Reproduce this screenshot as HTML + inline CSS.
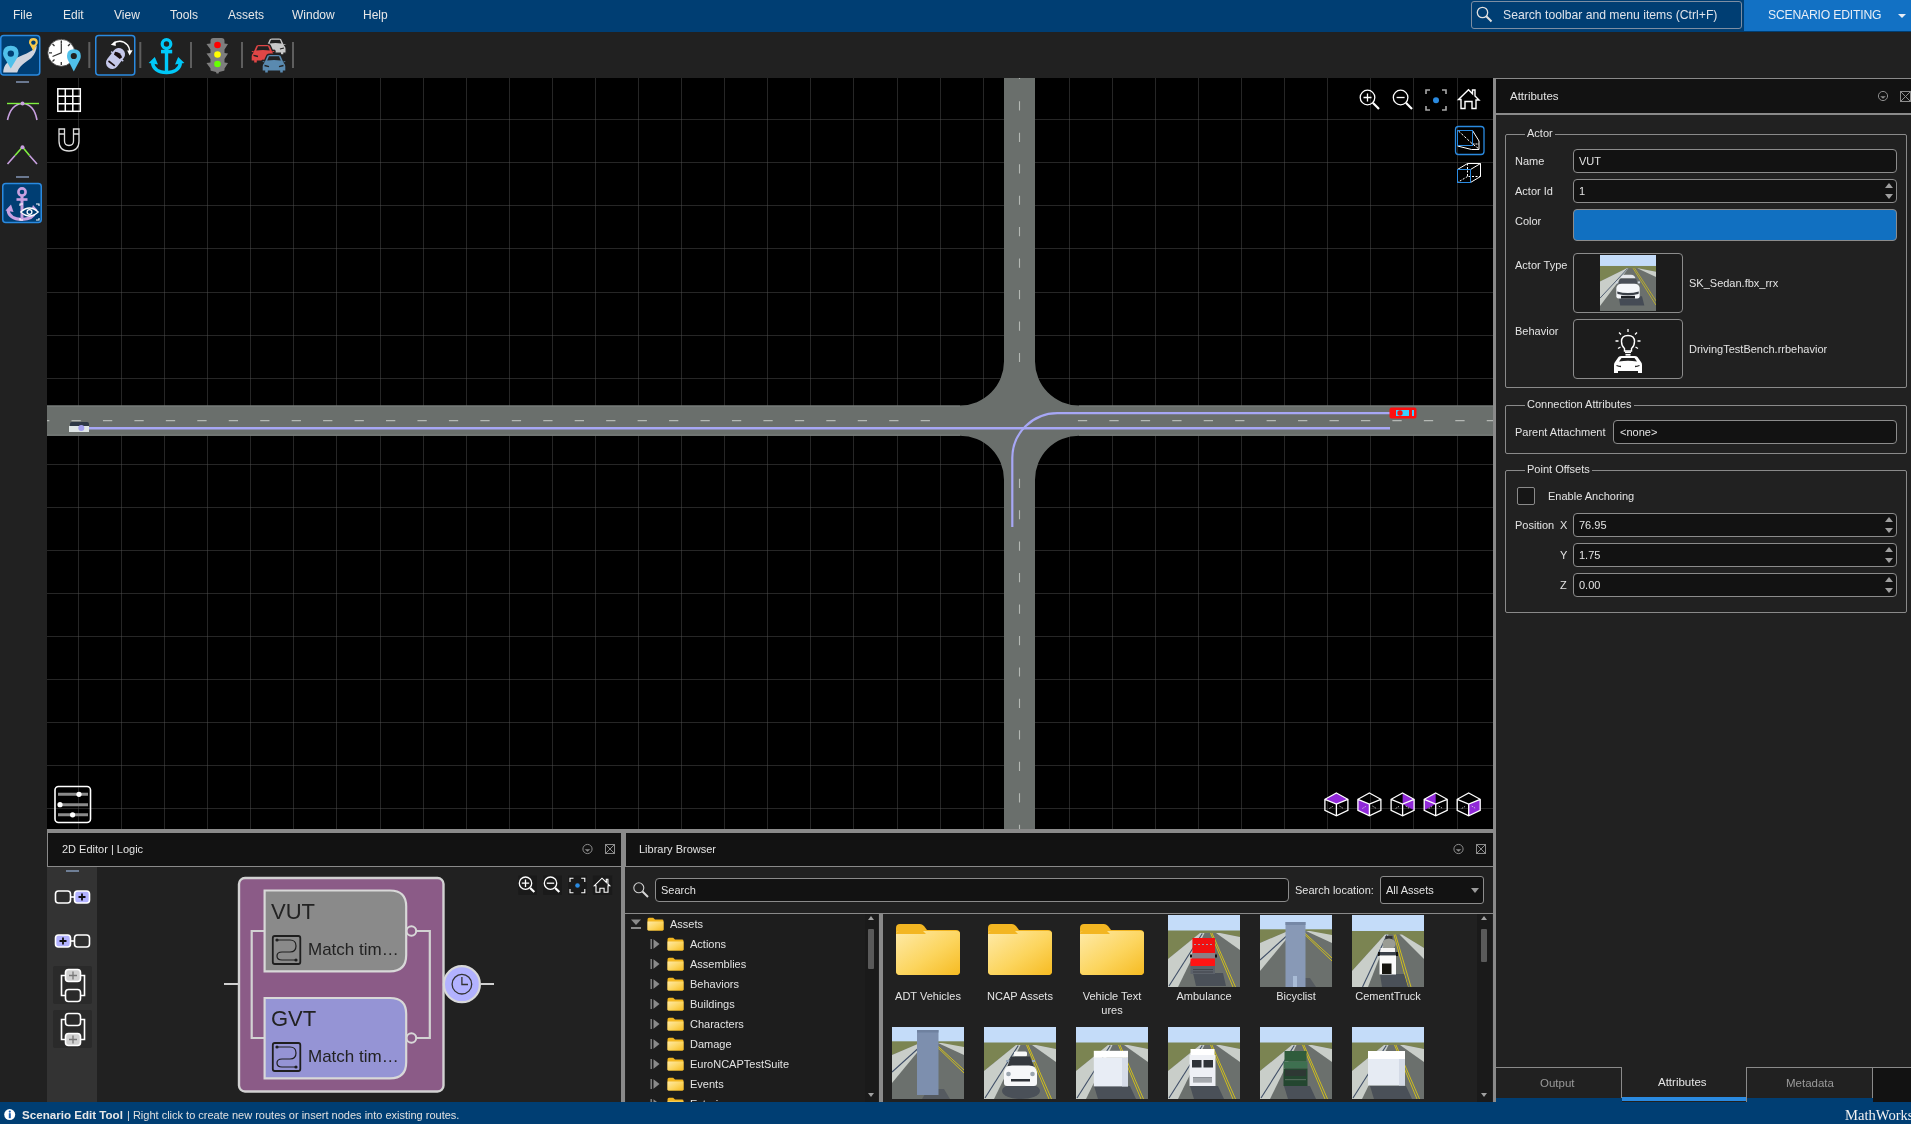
<!DOCTYPE html>
<html><head><meta charset="utf-8">
<style>
*{box-sizing:border-box;margin:0;padding:0}
html,body{width:1911px;height:1124px;overflow:hidden;background:#212121;font-family:"Liberation Sans",sans-serif;color:#e6e6e6}
.a{position:absolute}
.menubar{left:0;top:0;width:1911px;height:32px;background:#003e73}
.menubar span{position:absolute;top:8px;font-size:12px;color:#e8e8e8;will-change:transform}
.toolbar{left:0;top:32px;width:1911px;height:46px;background:#212121}
.vp{left:47px;top:78px;width:1446px;height:751px;background:#000;overflow:hidden}
.split{background:#8a8a8a}
.hdr{background:#121212;border:1px solid #8a8a8a;font-size:12px;color:#e6e6e6}
.lbl{position:absolute;font-size:11.5px;color:#e0e0e0;white-space:nowrap}
.fld{position:absolute;background:#121212;border:1px solid #8c8c8c;border-radius:4px;font-size:11.5px;color:#e6e6e6}
.grp{position:absolute;border:1px solid #8a8a8a;border-radius:2px}
.grpt{position:absolute;background:#212121;padding:0 3px;font-size:11.5px;color:#e0e0e0;white-space:nowrap}
.status{left:0;top:1102px;width:1911px;height:22px;background:#003e73}
.t{position:absolute;line-height:1;white-space:nowrap;font-size:11px;color:#e3e3e3;will-change:transform}
.spin{position:absolute;width:0;height:0;border-left:4px solid transparent;border-right:4px solid transparent}
.up{border-bottom:5px solid #a0a0a0}.dn{border-top:5px solid #a0a0a0}
</style></head><body>
<svg width="0" height="0" style="position:absolute"><defs>
<linearGradient id="fg" x1="0" y1="0" x2="1" y2="1"><stop offset="0" stop-color="#feeaa8"/><stop offset="0.55" stop-color="#fcd55e"/><stop offset="1" stop-color="#f6bb22"/></linearGradient>
</defs></svg>
<!-- MENUBAR -->
<div class="a menubar">
<span style="left:13px">File</span><span style="left:63px">Edit</span><span style="left:114px">View</span><span style="left:170px">Tools</span><span style="left:228px">Assets</span><span style="left:292px">Window</span><span style="left:363px">Help</span>
</div>
<div class="a" style="left:1471px;top:1px;width:271px;height:28px;border:1px solid #7d8ea3;border-radius:3px;background:#003e73"></div>
<svg class="a" style="left:1474px;top:5px" width="22" height="20"><circle cx="8.5" cy="7.5" r="5.2" stroke="#e0e0e0" stroke-width="1.3" fill="none"/><path d="M12.3 11.3L17.5 16.5" stroke="#e0e0e0" stroke-width="2"/></svg>
<span class="t" style="left:1503px;top:8.97px;font-size:12.2px;color:#dfe3ea">Search toolbar and menu items (Ctrl+F)</span>
<div class="a" style="left:1744px;top:0;width:167px;height:31px;background:#1271c4"></div>
<span class="t" style="left:1768px;top:8.97px;font-size:12.2px;color:#e8eef6;letter-spacing:-0.2px">SCENARIO EDITING</span>
<div class="spin dn" style="left:1897.5px;top:13.5px;border-left-width:4px;border-right-width:4px;border-top:4px solid #e8eef6"></div>
<!-- TOOLBAR -->
<div class="a toolbar"></div>
<svg class="a" style="left:0;top:32px" width="300" height="46" viewBox="0 32 300 46">
<!-- btn1 -->
<rect x="0.75" y="35.5" width="39" height="39.5" rx="3" fill="#003e73" stroke="#2a8ae0" stroke-width="1.5"/>
<path d="M3.2 72.6Q3.5 66 7 63Q11 59 18.5 57Q28 53 32 50.5L36.8 45.5Q36.5 53 31 58.2Q24 63 20.8 66.2Q18 69 17.2 72.6Z" fill="#d0d4de"/>
<path d="M10.8 68.6L4.5 58Q3 55.6 3 53.6Q3 45.8 10.8 45.8Q18.6 45.8 18.6 53.6Q18.6 55.6 17.1 58Z" fill="#50c0ea"/>
<circle cx="10.8" cy="53.6" r="3.2" fill="#003e73"/>
<path d="M33.4 51L29.8 44.6Q29 43.5 29 42.4Q29 38 33.4 38Q37.8 38 37.8 42.4Q37.8 43.5 37 44.6Z" fill="#f8c94c"/>
<circle cx="33.4" cy="42.6" r="2.2" fill="#003e73"/>
<!-- clock -->
<circle cx="61.3" cy="52.8" r="13.5" fill="#fff" stroke="#444" stroke-width="0.8"/>
<g stroke="#333" stroke-width="1.3"><path d="M61.3 40.5V43.5M61.3 62V65M49 52.8H52M70.5 52.8H73.5M52.5 44L54.5 46M70 44L68 46M52.5 61.5L54.5 59.5"/></g>
<path d="M61.3 43.5V52.8L52.5 56.5" stroke="#333" stroke-width="1.2" fill="none"/>
<path d="M73.8 71.5L67.8 59.8Q67 58 67 56Q67 49.2 73.8 49.2Q80.8 49.2 80.8 56Q80.8 58 80 59.8Z" fill="#4fc0ea"/>
<circle cx="73.8" cy="56" r="3.1" fill="#222"/>
<rect x="88.3" y="42" width="2" height="26" fill="#5e5e5e"/>
<!-- car rotate btn -->
<rect x="95.75" y="35.5" width="39" height="39.5" rx="3" fill="#212121" stroke="#2a8ae0" stroke-width="1.5"/>
<g transform="rotate(38 115.5 58.5)"><rect x="109.3" y="47" width="12.4" height="23" rx="6" fill="#c5c8ea"/><path d="M111 53.5Q115.5 50.5 120 53.5L119.2 56.3H111.8Z" fill="#1a0e10"/><rect x="111.5" y="64" width="8" height="1.6" fill="#1a0e10"/><rect x="107.8" y="55" width="2" height="1.5" fill="#c5c8ea"/><rect x="121.2" y="55" width="2" height="1.5" fill="#c5c8ea"/></g>
<path d="M113.5 43.5Q121 38.5 127.5 45Q129.5 47.5 129.8 51" stroke="#fff" stroke-width="1.4" fill="none"/>
<path d="M110.8 44.8L115.5 40.8L115.8 46Z" fill="#fff"/><path d="M129.6 55.5L132.6 50.2L127.2 50.5Z" fill="#fff"/>
<rect x="139.3" y="42" width="2" height="26" fill="#5e5e5e"/>
<!-- anchor -->
<circle cx="166.5" cy="44" r="4.3" fill="none" stroke="#00c8f8" stroke-width="3.2"/>
<rect x="161" y="49.8" width="11.2" height="3.6" fill="#00c8f8"/><rect x="164.8" y="48" width="3.4" height="24" fill="#00c8f8"/>
<path d="M152.5 63Q154 72.3 166.5 72.6Q179 72.3 180.5 63" fill="none" stroke="#00c8f8" stroke-width="3.4"/>
<path d="M148.6 63L154.8 57L158 64.5Z M184.4 63L178.2 57L175 64.5Z" fill="#00c8f8"/>
<rect x="190" y="42" width="2" height="26" fill="#5e5e5e"/>
<!-- traffic light -->
<path d="M210.5 41Q210.5 38 213.5 38H221.5Q224.5 38 224.5 41V43.5L228 44L224.5 49.5V53L228 53.5L224.5 59V62.5L228 63L224.5 68.5V70Q224.5 71 223 71L219 72L218.5 73.5H216.5L216 72L212 71Q210.5 71 210.5 70V68.5L206.5 63L210.5 62.5V59L206.5 53.5L210.5 53V49.5L206.5 44L210.5 43.5Z" fill="#7e7e7e"/>
<circle cx="217.5" cy="45" r="3.3" fill="#f00"/><circle cx="217.5" cy="54.5" r="3.3" fill="#ff0"/><circle cx="217.5" cy="64" r="3.3" fill="#6f0"/>
<rect x="241" y="42" width="2" height="26" fill="#5e5e5e"/>
<!-- cars -->
<g transform="translate(264.8 38) scale(0.89)"><path d="M5 1Q6 0 8 0H16Q18 0 19 1L21.5 6.5L23 6Q24 6 24 7V8L22.5 8.5Q24 10 24 12V17H21.5V19H17.5V17H6.5V19H2.5V17H0V12Q0 10 1.5 8.5L0 8V7Q0 6 1 6L2.5 6.5Z" fill="#c8c8c8" stroke="#212121" stroke-width="1.4"/><path d="M5.2 6.3L7 2H17L18.8 6.3Q12 5.2 5.2 6.3Z" fill="#212121"/><path d="M2.5 11.2L7 12.3M21.5 11.2L17 12.3" stroke="#212121" stroke-width="1.3"/></g><g transform="translate(251 44.2) scale(1.0)"><path d="M5 1Q6 0 8 0H16Q18 0 19 1L21.5 6.5L23 6Q24 6 24 7V8L22.5 8.5Q24 10 24 12V17H21.5V19H17.5V17H6.5V19H2.5V17H0V12Q0 10 1.5 8.5L0 8V7Q0 6 1 6L2.5 6.5Z" fill="#e04646" stroke="#212121" stroke-width="1.4"/><path d="M5.2 6.3L7 2H17L18.8 6.3Q12 5.2 5.2 6.3Z" fill="#212121"/><path d="M2.5 11.2L7 12.3M21.5 11.2L17 12.3" stroke="#212121" stroke-width="1.3"/></g><g transform="translate(262 54.3) scale(1.0)"><path d="M5 1Q6 0 8 0H16Q18 0 19 1L21.5 6.5L23 6Q24 6 24 7V8L22.5 8.5Q24 10 24 12V17H21.5V19H17.5V17H6.5V19H2.5V17H0V12Q0 10 1.5 8.5L0 8V7Q0 6 1 6L2.5 6.5Z" fill="#5a8ab0" stroke="#212121" stroke-width="1.4"/><path d="M5.2 6.3L7 2H17L18.8 6.3Q12 5.2 5.2 6.3Z" fill="#212121"/><path d="M2.5 11.2L7 12.3M21.5 11.2L17 12.3" stroke="#212121" stroke-width="1.3"/></g>
<rect x="292" y="42" width="2" height="26" fill="#5e5e5e"/>
</svg>

<!-- VIEWPORT -->
<div class="a vp"><svg width="1446" height="751" style="position:absolute;left:0;top:0">
<path d="M31.5 0V751M74.5 0V751M117.5 0V751M160.5 0V751M203.5 0V751M246.5 0V751M289.5 0V751M333.5 0V751M376.5 0V751M419.5 0V751M462.5 0V751M505.5 0V751M548.5 0V751M591.5 0V751M634.5 0V751M677.5 0V751M720.5 0V751M763.5 0V751M806.5 0V751M850.5 0V751M893.5 0V751M936.5 0V751M979.5 0V751M1022.5 0V751M1065.5 0V751M1108.5 0V751M1151.5 0V751M1194.5 0V751M1237.5 0V751M1280.5 0V751M1323.5 0V751M1366.5 0V751M1410.5 0V751M0 41.5H1446M0 84.5H1446M0 127.5H1446M0 170.5H1446M0 214.5H1446M0 257.5H1446M0 300.5H1446M0 343.5H1446M0 386.5H1446M0 429.5H1446M0 472.5H1446M0 515.5H1446M0 558.5H1446M0 601.5H1446M0 644.5H1446M0 687.5H1446M0 730.5H1446" stroke="#262626" stroke-width="1" fill="none"/>
<path d="M31 41h1v1h-1zM31 84h1v1h-1zM31 127h1v1h-1zM31 170h1v1h-1zM31 214h1v1h-1zM31 257h1v1h-1zM31 300h1v1h-1zM31 343h1v1h-1zM31 386h1v1h-1zM31 429h1v1h-1zM31 472h1v1h-1zM31 515h1v1h-1zM31 558h1v1h-1zM31 601h1v1h-1zM31 644h1v1h-1zM31 687h1v1h-1zM31 730h1v1h-1zM74 41h1v1h-1zM74 84h1v1h-1zM74 127h1v1h-1zM74 170h1v1h-1zM74 214h1v1h-1zM74 257h1v1h-1zM74 300h1v1h-1zM74 343h1v1h-1zM74 386h1v1h-1zM74 429h1v1h-1zM74 472h1v1h-1zM74 515h1v1h-1zM74 558h1v1h-1zM74 601h1v1h-1zM74 644h1v1h-1zM74 687h1v1h-1zM74 730h1v1h-1zM117 41h1v1h-1zM117 84h1v1h-1zM117 127h1v1h-1zM117 170h1v1h-1zM117 214h1v1h-1zM117 257h1v1h-1zM117 300h1v1h-1zM117 343h1v1h-1zM117 386h1v1h-1zM117 429h1v1h-1zM117 472h1v1h-1zM117 515h1v1h-1zM117 558h1v1h-1zM117 601h1v1h-1zM117 644h1v1h-1zM117 687h1v1h-1zM117 730h1v1h-1zM160 41h1v1h-1zM160 84h1v1h-1zM160 127h1v1h-1zM160 170h1v1h-1zM160 214h1v1h-1zM160 257h1v1h-1zM160 300h1v1h-1zM160 343h1v1h-1zM160 386h1v1h-1zM160 429h1v1h-1zM160 472h1v1h-1zM160 515h1v1h-1zM160 558h1v1h-1zM160 601h1v1h-1zM160 644h1v1h-1zM160 687h1v1h-1zM160 730h1v1h-1zM203 41h1v1h-1zM203 84h1v1h-1zM203 127h1v1h-1zM203 170h1v1h-1zM203 214h1v1h-1zM203 257h1v1h-1zM203 300h1v1h-1zM203 343h1v1h-1zM203 386h1v1h-1zM203 429h1v1h-1zM203 472h1v1h-1zM203 515h1v1h-1zM203 558h1v1h-1zM203 601h1v1h-1zM203 644h1v1h-1zM203 687h1v1h-1zM203 730h1v1h-1zM246 41h1v1h-1zM246 84h1v1h-1zM246 127h1v1h-1zM246 170h1v1h-1zM246 214h1v1h-1zM246 257h1v1h-1zM246 300h1v1h-1zM246 343h1v1h-1zM246 386h1v1h-1zM246 429h1v1h-1zM246 472h1v1h-1zM246 515h1v1h-1zM246 558h1v1h-1zM246 601h1v1h-1zM246 644h1v1h-1zM246 687h1v1h-1zM246 730h1v1h-1zM289 41h1v1h-1zM289 84h1v1h-1zM289 127h1v1h-1zM289 170h1v1h-1zM289 214h1v1h-1zM289 257h1v1h-1zM289 300h1v1h-1zM289 343h1v1h-1zM289 386h1v1h-1zM289 429h1v1h-1zM289 472h1v1h-1zM289 515h1v1h-1zM289 558h1v1h-1zM289 601h1v1h-1zM289 644h1v1h-1zM289 687h1v1h-1zM289 730h1v1h-1zM333 41h1v1h-1zM333 84h1v1h-1zM333 127h1v1h-1zM333 170h1v1h-1zM333 214h1v1h-1zM333 257h1v1h-1zM333 300h1v1h-1zM333 343h1v1h-1zM333 386h1v1h-1zM333 429h1v1h-1zM333 472h1v1h-1zM333 515h1v1h-1zM333 558h1v1h-1zM333 601h1v1h-1zM333 644h1v1h-1zM333 687h1v1h-1zM333 730h1v1h-1zM376 41h1v1h-1zM376 84h1v1h-1zM376 127h1v1h-1zM376 170h1v1h-1zM376 214h1v1h-1zM376 257h1v1h-1zM376 300h1v1h-1zM376 343h1v1h-1zM376 386h1v1h-1zM376 429h1v1h-1zM376 472h1v1h-1zM376 515h1v1h-1zM376 558h1v1h-1zM376 601h1v1h-1zM376 644h1v1h-1zM376 687h1v1h-1zM376 730h1v1h-1zM419 41h1v1h-1zM419 84h1v1h-1zM419 127h1v1h-1zM419 170h1v1h-1zM419 214h1v1h-1zM419 257h1v1h-1zM419 300h1v1h-1zM419 343h1v1h-1zM419 386h1v1h-1zM419 429h1v1h-1zM419 472h1v1h-1zM419 515h1v1h-1zM419 558h1v1h-1zM419 601h1v1h-1zM419 644h1v1h-1zM419 687h1v1h-1zM419 730h1v1h-1zM462 41h1v1h-1zM462 84h1v1h-1zM462 127h1v1h-1zM462 170h1v1h-1zM462 214h1v1h-1zM462 257h1v1h-1zM462 300h1v1h-1zM462 343h1v1h-1zM462 386h1v1h-1zM462 429h1v1h-1zM462 472h1v1h-1zM462 515h1v1h-1zM462 558h1v1h-1zM462 601h1v1h-1zM462 644h1v1h-1zM462 687h1v1h-1zM462 730h1v1h-1zM505 41h1v1h-1zM505 84h1v1h-1zM505 127h1v1h-1zM505 170h1v1h-1zM505 214h1v1h-1zM505 257h1v1h-1zM505 300h1v1h-1zM505 343h1v1h-1zM505 386h1v1h-1zM505 429h1v1h-1zM505 472h1v1h-1zM505 515h1v1h-1zM505 558h1v1h-1zM505 601h1v1h-1zM505 644h1v1h-1zM505 687h1v1h-1zM505 730h1v1h-1zM548 41h1v1h-1zM548 84h1v1h-1zM548 127h1v1h-1zM548 170h1v1h-1zM548 214h1v1h-1zM548 257h1v1h-1zM548 300h1v1h-1zM548 343h1v1h-1zM548 386h1v1h-1zM548 429h1v1h-1zM548 472h1v1h-1zM548 515h1v1h-1zM548 558h1v1h-1zM548 601h1v1h-1zM548 644h1v1h-1zM548 687h1v1h-1zM548 730h1v1h-1zM591 41h1v1h-1zM591 84h1v1h-1zM591 127h1v1h-1zM591 170h1v1h-1zM591 214h1v1h-1zM591 257h1v1h-1zM591 300h1v1h-1zM591 343h1v1h-1zM591 386h1v1h-1zM591 429h1v1h-1zM591 472h1v1h-1zM591 515h1v1h-1zM591 558h1v1h-1zM591 601h1v1h-1zM591 644h1v1h-1zM591 687h1v1h-1zM591 730h1v1h-1zM634 41h1v1h-1zM634 84h1v1h-1zM634 127h1v1h-1zM634 170h1v1h-1zM634 214h1v1h-1zM634 257h1v1h-1zM634 300h1v1h-1zM634 343h1v1h-1zM634 386h1v1h-1zM634 429h1v1h-1zM634 472h1v1h-1zM634 515h1v1h-1zM634 558h1v1h-1zM634 601h1v1h-1zM634 644h1v1h-1zM634 687h1v1h-1zM634 730h1v1h-1zM677 41h1v1h-1zM677 84h1v1h-1zM677 127h1v1h-1zM677 170h1v1h-1zM677 214h1v1h-1zM677 257h1v1h-1zM677 300h1v1h-1zM677 343h1v1h-1zM677 386h1v1h-1zM677 429h1v1h-1zM677 472h1v1h-1zM677 515h1v1h-1zM677 558h1v1h-1zM677 601h1v1h-1zM677 644h1v1h-1zM677 687h1v1h-1zM677 730h1v1h-1zM720 41h1v1h-1zM720 84h1v1h-1zM720 127h1v1h-1zM720 170h1v1h-1zM720 214h1v1h-1zM720 257h1v1h-1zM720 300h1v1h-1zM720 343h1v1h-1zM720 386h1v1h-1zM720 429h1v1h-1zM720 472h1v1h-1zM720 515h1v1h-1zM720 558h1v1h-1zM720 601h1v1h-1zM720 644h1v1h-1zM720 687h1v1h-1zM720 730h1v1h-1zM763 41h1v1h-1zM763 84h1v1h-1zM763 127h1v1h-1zM763 170h1v1h-1zM763 214h1v1h-1zM763 257h1v1h-1zM763 300h1v1h-1zM763 343h1v1h-1zM763 386h1v1h-1zM763 429h1v1h-1zM763 472h1v1h-1zM763 515h1v1h-1zM763 558h1v1h-1zM763 601h1v1h-1zM763 644h1v1h-1zM763 687h1v1h-1zM763 730h1v1h-1zM806 41h1v1h-1zM806 84h1v1h-1zM806 127h1v1h-1zM806 170h1v1h-1zM806 214h1v1h-1zM806 257h1v1h-1zM806 300h1v1h-1zM806 343h1v1h-1zM806 386h1v1h-1zM806 429h1v1h-1zM806 472h1v1h-1zM806 515h1v1h-1zM806 558h1v1h-1zM806 601h1v1h-1zM806 644h1v1h-1zM806 687h1v1h-1zM806 730h1v1h-1zM850 41h1v1h-1zM850 84h1v1h-1zM850 127h1v1h-1zM850 170h1v1h-1zM850 214h1v1h-1zM850 257h1v1h-1zM850 300h1v1h-1zM850 343h1v1h-1zM850 386h1v1h-1zM850 429h1v1h-1zM850 472h1v1h-1zM850 515h1v1h-1zM850 558h1v1h-1zM850 601h1v1h-1zM850 644h1v1h-1zM850 687h1v1h-1zM850 730h1v1h-1zM893 41h1v1h-1zM893 84h1v1h-1zM893 127h1v1h-1zM893 170h1v1h-1zM893 214h1v1h-1zM893 257h1v1h-1zM893 300h1v1h-1zM893 343h1v1h-1zM893 386h1v1h-1zM893 429h1v1h-1zM893 472h1v1h-1zM893 515h1v1h-1zM893 558h1v1h-1zM893 601h1v1h-1zM893 644h1v1h-1zM893 687h1v1h-1zM893 730h1v1h-1zM936 41h1v1h-1zM936 84h1v1h-1zM936 127h1v1h-1zM936 170h1v1h-1zM936 214h1v1h-1zM936 257h1v1h-1zM936 300h1v1h-1zM936 343h1v1h-1zM936 386h1v1h-1zM936 429h1v1h-1zM936 472h1v1h-1zM936 515h1v1h-1zM936 558h1v1h-1zM936 601h1v1h-1zM936 644h1v1h-1zM936 687h1v1h-1zM936 730h1v1h-1zM979 41h1v1h-1zM979 84h1v1h-1zM979 127h1v1h-1zM979 170h1v1h-1zM979 214h1v1h-1zM979 257h1v1h-1zM979 300h1v1h-1zM979 343h1v1h-1zM979 386h1v1h-1zM979 429h1v1h-1zM979 472h1v1h-1zM979 515h1v1h-1zM979 558h1v1h-1zM979 601h1v1h-1zM979 644h1v1h-1zM979 687h1v1h-1zM979 730h1v1h-1zM1022 41h1v1h-1zM1022 84h1v1h-1zM1022 127h1v1h-1zM1022 170h1v1h-1zM1022 214h1v1h-1zM1022 257h1v1h-1zM1022 300h1v1h-1zM1022 343h1v1h-1zM1022 386h1v1h-1zM1022 429h1v1h-1zM1022 472h1v1h-1zM1022 515h1v1h-1zM1022 558h1v1h-1zM1022 601h1v1h-1zM1022 644h1v1h-1zM1022 687h1v1h-1zM1022 730h1v1h-1zM1065 41h1v1h-1zM1065 84h1v1h-1zM1065 127h1v1h-1zM1065 170h1v1h-1zM1065 214h1v1h-1zM1065 257h1v1h-1zM1065 300h1v1h-1zM1065 343h1v1h-1zM1065 386h1v1h-1zM1065 429h1v1h-1zM1065 472h1v1h-1zM1065 515h1v1h-1zM1065 558h1v1h-1zM1065 601h1v1h-1zM1065 644h1v1h-1zM1065 687h1v1h-1zM1065 730h1v1h-1zM1108 41h1v1h-1zM1108 84h1v1h-1zM1108 127h1v1h-1zM1108 170h1v1h-1zM1108 214h1v1h-1zM1108 257h1v1h-1zM1108 300h1v1h-1zM1108 343h1v1h-1zM1108 386h1v1h-1zM1108 429h1v1h-1zM1108 472h1v1h-1zM1108 515h1v1h-1zM1108 558h1v1h-1zM1108 601h1v1h-1zM1108 644h1v1h-1zM1108 687h1v1h-1zM1108 730h1v1h-1zM1151 41h1v1h-1zM1151 84h1v1h-1zM1151 127h1v1h-1zM1151 170h1v1h-1zM1151 214h1v1h-1zM1151 257h1v1h-1zM1151 300h1v1h-1zM1151 343h1v1h-1zM1151 386h1v1h-1zM1151 429h1v1h-1zM1151 472h1v1h-1zM1151 515h1v1h-1zM1151 558h1v1h-1zM1151 601h1v1h-1zM1151 644h1v1h-1zM1151 687h1v1h-1zM1151 730h1v1h-1zM1194 41h1v1h-1zM1194 84h1v1h-1zM1194 127h1v1h-1zM1194 170h1v1h-1zM1194 214h1v1h-1zM1194 257h1v1h-1zM1194 300h1v1h-1zM1194 343h1v1h-1zM1194 386h1v1h-1zM1194 429h1v1h-1zM1194 472h1v1h-1zM1194 515h1v1h-1zM1194 558h1v1h-1zM1194 601h1v1h-1zM1194 644h1v1h-1zM1194 687h1v1h-1zM1194 730h1v1h-1zM1237 41h1v1h-1zM1237 84h1v1h-1zM1237 127h1v1h-1zM1237 170h1v1h-1zM1237 214h1v1h-1zM1237 257h1v1h-1zM1237 300h1v1h-1zM1237 343h1v1h-1zM1237 386h1v1h-1zM1237 429h1v1h-1zM1237 472h1v1h-1zM1237 515h1v1h-1zM1237 558h1v1h-1zM1237 601h1v1h-1zM1237 644h1v1h-1zM1237 687h1v1h-1zM1237 730h1v1h-1zM1280 41h1v1h-1zM1280 84h1v1h-1zM1280 127h1v1h-1zM1280 170h1v1h-1zM1280 214h1v1h-1zM1280 257h1v1h-1zM1280 300h1v1h-1zM1280 343h1v1h-1zM1280 386h1v1h-1zM1280 429h1v1h-1zM1280 472h1v1h-1zM1280 515h1v1h-1zM1280 558h1v1h-1zM1280 601h1v1h-1zM1280 644h1v1h-1zM1280 687h1v1h-1zM1280 730h1v1h-1zM1323 41h1v1h-1zM1323 84h1v1h-1zM1323 127h1v1h-1zM1323 170h1v1h-1zM1323 214h1v1h-1zM1323 257h1v1h-1zM1323 300h1v1h-1zM1323 343h1v1h-1zM1323 386h1v1h-1zM1323 429h1v1h-1zM1323 472h1v1h-1zM1323 515h1v1h-1zM1323 558h1v1h-1zM1323 601h1v1h-1zM1323 644h1v1h-1zM1323 687h1v1h-1zM1323 730h1v1h-1zM1366 41h1v1h-1zM1366 84h1v1h-1zM1366 127h1v1h-1zM1366 170h1v1h-1zM1366 214h1v1h-1zM1366 257h1v1h-1zM1366 300h1v1h-1zM1366 343h1v1h-1zM1366 386h1v1h-1zM1366 429h1v1h-1zM1366 472h1v1h-1zM1366 515h1v1h-1zM1366 558h1v1h-1zM1366 601h1v1h-1zM1366 644h1v1h-1zM1366 687h1v1h-1zM1366 730h1v1h-1zM1410 41h1v1h-1zM1410 84h1v1h-1zM1410 127h1v1h-1zM1410 170h1v1h-1zM1410 214h1v1h-1zM1410 257h1v1h-1zM1410 300h1v1h-1zM1410 343h1v1h-1zM1410 386h1v1h-1zM1410 429h1v1h-1zM1410 472h1v1h-1zM1410 515h1v1h-1zM1410 558h1v1h-1zM1410 601h1v1h-1zM1410 644h1v1h-1zM1410 687h1v1h-1zM1410 730h1v1h-1z" fill="#3a3a3a"/>
<path d="M0 327.5H913A44 44 0 0 0 957 283.5V0H988V283.5A44 44 0 0 0 1032 327.5H1446V357.7H1032A44 44 0 0 0 988 401.7V751H957V401.7A44 44 0 0 0 913 357.7H0Z" fill="#6a6f6c"/>
<path d="M0 328.0H913M1032 328.0H1446M0 357.2H913M1032 357.2H1446" stroke="#7f8481" stroke-width="1" fill="none"/>
<path d="M0 342.6H2.35M24.5 342.6H33.8M55.95 342.6H65.25M87.4 342.6H96.7M118.85 342.6H128.15M150.3 342.6H159.6M181.75 342.6H191.05M213.2 342.6H222.5M244.65 342.6H253.95M276.1 342.6H285.4M307.55 342.6H316.85M339.0 342.6H348.3M370.45 342.6H379.75M401.9 342.6H411.2M433.35 342.6H442.65M464.8 342.6H474.1M496.25 342.6H505.55M527.7 342.6H537.0M559.15 342.6H568.45M590.6 342.6H599.9M622.05 342.6H631.35M653.5 342.6H662.8M684.95 342.6H694.25M716.4 342.6H725.7M747.85 342.6H757.15M779.3 342.6H788.6M810.75 342.6H820.05M842.2 342.6H851.5M873.65 342.6H882.95M1030.9 342.6H1040.2M1062.35 342.6H1071.65M1093.8 342.6H1103.1M1125.25 342.6H1134.55M1156.7 342.6H1166.0M1188.15 342.6H1197.45M1219.6 342.6H1228.9M1251.05 342.6H1260.35M1282.5 342.6H1291.8M1313.95 342.6H1323.25M1345.4 342.6H1354.7M1376.85 342.6H1386.15M1408.3 342.6H1417.6M1439.75 342.6H1446M972.5 0V1.05M972.5 23.3V32.5M972.5 54.75V63.95M972.5 86.2V95.4M972.5 117.65V126.85M972.5 149.1V158.3M972.5 180.55V189.75M972.5 212.0V221.2M972.5 243.45V252.65M972.5 274.9V284.1M972.5 400.7V409.9M972.5 432.15V441.35M972.5 463.6V472.8M972.5 495.05V504.25M972.5 526.5V535.7M972.5 557.95V567.15M972.5 589.4V598.6M972.5 620.85V630.05M972.5 652.3V661.5M972.5 683.75V692.95M972.5 715.2V724.4M972.5 746.65V751" stroke="#b4b8b4" stroke-width="1.1" fill="none"/>
<path d="M38 350.2H1343" stroke="#a7a7f5" stroke-width="2.4" fill="none"/>
<path d="M1343 335.1H1010.3A45 45 0 0 0 965.3 380.1V449" stroke="#a7a7f5" stroke-width="2.2" fill="none"/>
<rect x="23" y="344" width="19" height="9" fill="#2e3846" rx="2"/>
<rect x="22" y="348" width="20" height="6" fill="#dfe6e6"/>
<circle cx="34.3" cy="350" r="3" fill="#a3a0ee"/>
<rect x="1342.5" y="329.5" width="27" height="11" rx="2" fill="#ff1010"/>
<rect x="1349" y="332" width="13" height="6" fill="#3ad0ff"/>
<rect x="1365" y="332" width="2" height="6" fill="#3ad0ff"/>
<circle cx="1353" cy="335" r="2.7" fill="#ff1010"/>
</svg></div>
<svg class="a" style="left:0;top:78px" width="47" height="150" viewBox="0 78 47 150">
<rect x="16" y="81" width="13" height="2" fill="#6a7890"/>
<path d="M7.5 120Q11 104 22.5 103.5Q34 104 37 120" stroke="#c8a0e0" stroke-width="1.6" fill="none"/>
<path d="M7 103.5H39" stroke="#80f040" stroke-width="1.4"/>
<circle cx="22.5" cy="103.5" r="2" fill="#c8a0e0"/>
<path d="M7.5 164L15 155.5M37 164L29.5 155.5" stroke="#c8a0e0" stroke-width="1.6"/>
<path d="M15 155.5L22.5 147M29.5 155.5L22.5 147" stroke="#80f040" stroke-width="1.6"/>
<circle cx="22.5" cy="147.3" r="2" fill="#c8a0e0"/>
<rect x="16" y="176" width="13" height="2" fill="#6a7890"/>
<rect x="2.75" y="183.5" width="38.5" height="39" rx="3" fill="#003e73" stroke="#2a8ae0" stroke-width="1.5"/>
<g stroke="#c8a0e0" fill="none"><circle cx="22" cy="192" r="3.6" stroke-width="2.6"/><path d="M22 195.5V219" stroke-width="3"/><path d="M16.5 199.5H27.5" stroke-width="2.6"/><path d="M8 210Q9 219 22 219.5Q33 219 35 212" stroke-width="3"/></g>
<path d="M5.5 210.5L11 204.5L13.5 212Z M37.5 210L33 205L31 211Z" fill="#c8a0e0"/>
<path d="M20 206V204H23M36 204H39V206M39 218V220H36M23 220H20V218" stroke="#fff" stroke-width="1.1" fill="none"/>
<path d="M20.8 212Q29.5 204 38.2 212Q29.5 220 20.8 212Z" fill="#003e73" stroke="#fff" stroke-width="1.3"/>
<circle cx="29.5" cy="212" r="2.4" fill="none" stroke="#fff" stroke-width="1.3"/>
</svg>
<svg class="a" style="left:47px;top:78px" width="60" height="90" viewBox="47 78 60 90">
<g stroke="#fff" stroke-width="1.5" fill="none"><rect x="57.8" y="88.8" width="22.5" height="22.5"/><path d="M65.3 88.8V111.3M72.8 88.8V111.3M57.8 96.3H80.3M57.8 103.8H80.3"/></g>
<path d="M59 129V141Q59 151 69 151Q79 151 79 141V129H73.5V141Q73.5 145.5 69 145.5Q64.5 145.5 64.5 141V129Z" fill="none" stroke="#ddd" stroke-width="1.3"/>
<path d="M59 134H64.5M73.5 134H79" stroke="#ddd" stroke-width="1.3"/>
</svg>
<svg class="a" style="left:1350px;top:80px" width="143" height="110" viewBox="1350 80 143 110">
<g stroke="#fff" fill="none" stroke-width="1.3"><circle cx="1367.5" cy="97.5" r="7.3"/><path d="M1363.5 97.5H1371.5M1367.5 93.5V101.5"/><path d="M1372.8 102.8L1379 109" stroke-width="2.2"/>
<circle cx="1400.6" cy="97.5" r="7.3"/><path d="M1396.6 97.5H1404.6"/><path d="M1405.9 102.8L1412 109" stroke-width="2.2"/>
<path d="M1458.5 99.5L1468.5 89.7L1472.5 93.7V90H1475V96L1479 100H1476V108.5H1472V101.5H1465V108.5H1461V99.5Z" stroke-width="1.4"/></g>
<path d="M1426 94V90H1430M1442 90H1446V94M1446 106V110H1442M1430 110H1426V106" stroke="#a8a8a8" stroke-width="1.6" fill="none"/>
<circle cx="1436" cy="100.3" r="3" fill="#2a8ae0"/>
<rect x="1455.5" y="126.5" width="28.5" height="28" rx="3" fill="none" stroke="#2a8ae0" stroke-width="1.3"/>
<g stroke="#fff" fill="none" stroke-width="1"><path d="M1472.5 130.5L1479 141V149.5H1471.5L1457.5 146"/><path d="M1472.5 144H1479" stroke-dasharray="2 1"/><path d="M1458.5 131L1472 143.5L1479 149" stroke-dasharray="2.5 1.5"/></g>
<rect x="1457.5" y="130.5" width="15" height="15" fill="none" stroke="#2a8ae0" stroke-width="1"/>
<g stroke="#fff" fill="none" stroke-width="1"><path d="M1457.5 169.5L1467.5 163.5H1480.5V176.5L1470.5 182.5M1470.5 169.5L1480.5 163.5"/><path d="M1467.5 163.5V176.5H1480.5M1467.5 176.5L1457.5 182.5" stroke-dasharray="2 1.5"/></g>
<rect x="1457.5" y="169.5" width="13" height="13" fill="none" stroke="#2a8ae0" stroke-width="1"/>
</svg>
<svg class="a" style="left:50px;top:780px" width="50" height="48" viewBox="50 780 50 48">
<rect x="55" y="786.5" width="35.5" height="36" rx="3.5" fill="none" stroke="#fff" stroke-width="1.6"/>
<path d="M58 794.3H88M58 804.7H88M58 814.8H88" stroke="#8a8a8a" stroke-width="3"/>
<circle cx="79" cy="794.3" r="2.6" fill="#fff"/><circle cx="60" cy="804.7" r="2.6" fill="#fff"/><circle cx="72.6" cy="814.8" r="2.6" fill="#fff"/>
</svg>
<svg class="a" style="left:1320px;top:788px" width="170" height="32" viewBox="1320 788 170 32">
<path d="M1336.4 793L1347.9 799.3L1336.4 804L1324.9 799.3Z" fill="#9028d8"/>
<path d="M1336.4 793L1347.9 799.3L1347.9 810.3L1336.4 815.8L1324.9 810.3L1324.9 799.3ZM1324.9 799.3L1336.4 804L1347.9 799.3M1336.4 804V815.8" fill="none" stroke="#fff" stroke-width="1.3"/>
<path d="M1329.4 808.5L1333.4 806M1339.4 806L1343.4 808.5" stroke="#ddd" stroke-width="0.8" stroke-dasharray="1.5 1"/>
<path d="M1357.9 799.3L1369.4 804L1369.4 815.8L1357.9 810.3Z" fill="#9028d8"/>
<path d="M1369.4 793L1380.9 799.3L1380.9 810.3L1369.4 815.8L1357.9 810.3L1357.9 799.3ZM1357.9 799.3L1369.4 804L1380.9 799.3M1369.4 804V815.8" fill="none" stroke="#fff" stroke-width="1.3"/>
<path d="M1362.4 808.5L1366.4 806M1372.4 806L1376.4 808.5" stroke="#ddd" stroke-width="0.8" stroke-dasharray="1.5 1"/>
<path d="M1402.6 793L1414.1 799.3L1402.6 804Z" fill="#9028d8"/><path d="M1402.6 804L1414.1 799.3L1414.1 810.3Z" fill="#9028d8"/>
<path d="M1402.6 793L1414.1 799.3L1414.1 810.3L1402.6 815.8L1391.1 810.3L1391.1 799.3ZM1391.1 799.3L1402.6 804L1414.1 799.3M1402.6 804V815.8" fill="none" stroke="#fff" stroke-width="1.3"/>
<path d="M1395.6 808.5L1399.6 806M1405.6 806L1409.6 808.5" stroke="#ddd" stroke-width="0.8" stroke-dasharray="1.5 1"/>
<path d="M1435.7 793L1424.2 799.3L1435.7 804Z" fill="#9028d8"/><path d="M1435.7 804L1424.2 799.3L1424.2 810.3Z" fill="#9028d8"/>
<path d="M1435.7 793L1447.2 799.3L1447.2 810.3L1435.7 815.8L1424.2 810.3L1424.2 799.3ZM1424.2 799.3L1435.7 804L1447.2 799.3M1435.7 804V815.8" fill="none" stroke="#fff" stroke-width="1.3"/>
<path d="M1428.7 808.5L1432.7 806M1438.7 806L1442.7 808.5" stroke="#ddd" stroke-width="0.8" stroke-dasharray="1.5 1"/>
<path d="M1468.7 804L1480.2 799.3L1480.2 810.3L1468.7 815.8Z" fill="#9028d8"/>
<path d="M1468.7 793L1480.2 799.3L1480.2 810.3L1468.7 815.8L1457.2 810.3L1457.2 799.3ZM1457.2 799.3L1468.7 804L1480.2 799.3M1468.7 804V815.8" fill="none" stroke="#fff" stroke-width="1.3"/>
<path d="M1461.7 808.5L1465.7 806M1471.7 806L1475.7 808.5" stroke="#ddd" stroke-width="0.8" stroke-dasharray="1.5 1"/>
</svg>

<!-- splitters -->
<div class="a split" style="left:1493px;top:78px;width:3px;height:1024px"></div>
<div class="a split" style="left:47px;top:829px;width:1446px;height:3px"></div>
<div class="a split" style="left:621px;top:832px;width:4px;height:270px"></div>
<!-- ATTRIBUTES -->
<div class="a" style="left:1496px;top:78px;width:415px;height:37px;background:#121212;border-top:1px solid #8a8a8a;border-bottom:2px solid #8a8a8a"></div>
<span class="t" style="left:1510px;top:91.07px;font-size:11.5px;">Attributes</span>
<svg class="a" style="left:1870px;top:85px" width="41" height="22"><circle cx="13" cy="11" r="4.6" stroke="#8c8c8c" stroke-width="1" fill="none"/><path d="M10.2 11.2h5.6l-2.8 2.6z" fill="#8c8c8c"/><rect x="30.5" y="6.5" width="10" height="10" stroke="#8c8c8c" fill="none"/><path d="M30.5 6.5l10 10M40.5 6.5l-10 10" stroke="#8c8c8c"/></svg>
<div class="grp" style="left:1505px;top:134px;width:402px;height:254px"></div>
<span class="t" style="left:1525px;top:127.59px;font-size:11px;background:#212121;padding:0 2px">Actor</span>
<div class="grp" style="left:1505px;top:405px;width:402px;height:49px"></div>
<span class="t" style="left:1525px;top:399.19px;font-size:11px;background:#212121;padding:0 2px">Connection Attributes</span>
<div class="grp" style="left:1505px;top:470px;width:402px;height:143px"></div>
<span class="t" style="left:1525px;top:463.89px;font-size:11px;background:#212121;padding:0 2px">Point Offsets</span>
<span class="t" style="left:1515px;top:156.49px;font-size:11px;">Name</span>
<div class="fld" style="left:1573px;top:149px;width:324px;height:24px;background:#121212"></div>
<span class="t" style="left:1579px;top:156.49px;font-size:11px;">VUT</span>
<span class="t" style="left:1515px;top:186.39px;font-size:11px;">Actor Id</span>
<div class="fld" style="left:1573px;top:179px;width:324px;height:24px;background:#121212"></div><div class="spin up" style="left:1885px;top:183px"></div><div class="spin dn" style="left:1885px;top:194px"></div>
<span class="t" style="left:1579px;top:186.39px;font-size:11px;">1</span>
<span class="t" style="left:1515px;top:216.29px;font-size:11px;">Color</span>
<div class="fld" style="left:1573px;top:209px;width:324px;height:32px;background:#1170c1"></div>
<span class="t" style="left:1515px;top:259.99px;font-size:11px;">Actor Type</span>
<div class="fld" style="left:1573px;top:253px;width:110px;height:60px;background:#1c1c1c"></div>
<svg class="a" style="left:1600px;top:255px" width="56" height="56" viewBox="0 0 72 72"><rect width="72" height="72" fill="#7b8452"/><rect width="72" height="14.1" fill="#c4dcf9"/><path d="M34.4 17H49L72 21.5V72H0V34Z" fill="#6b706d"/><path d="M34.4 17H36.6L0 65.6V34Z" fill="#c9cec9"/><path d="M35.5 17.5L0 55.5" stroke="#3e4d66" stroke-width="1.1"/><path d="M48 17H49L72 21.5V28.3Z" fill="#c9cec9"/><path d="M42.5 17L72 64.5M44.5 17L72 59" stroke="#d9c616" stroke-width="0.9"/>
<path d="M24 53H54L57 65H26Z" fill="#454b55"/>
<path d="M26.5 30Q27.5 25.5 32 25.5H40Q44.5 25.5 45.5 30Z" fill="#e6e8ec"/>
<path d="M25.5 30.5H46.5L48.5 37H23.5Z" fill="#4a4f58"/><rect x="20.5" y="34" width="3" height="2.5" fill="#cfd6e0"/><rect x="48.5" y="34" width="3" height="2.5" fill="#cfd6e0"/>
<path d="M21 42Q22 37 28 37H44Q50 37 51 42V53Q51 56 48 56H24Q21 56 21 53Z" fill="#f5f7fa"/>
<path d="M22 47Q36 51 50 47L49.5 50Q36 53.5 22.5 50Z" fill="#3a3f47"/>
<rect x="27" y="52.5" width="18" height="3.5" fill="#1e2126"/>
</svg>
<span class="t" style="left:1689px;top:277.69px;font-size:11px;">SK_Sedan.fbx_rrx</span>
<span class="t" style="left:1515px;top:326.09px;font-size:11px;">Behavior</span>
<div class="fld" style="left:1573px;top:319px;width:110px;height:60px;background:#1c1c1c"></div>
<svg class="a" style="left:1600px;top:326px" width="56" height="50" viewBox="0 0 56 50">
<g stroke="#fff" stroke-width="1.3" fill="none"><path d="M28 3V6M19 6.5L21 8.5M37 6.5L35 8.5M15.5 15H18.5M37.5 15H40.5M18 22.5L20.5 21M38 22.5L35.5 21"/>
<path d="M24.5 22.5Q21.5 20 21.5 15.5Q21.5 9.5 28 9.5Q34.5 9.5 34.5 15.5Q34.5 20 31.5 22.5V25H24.5Z" stroke-width="1.4"/></g>
<rect x="25" y="25.5" width="6" height="1.6" fill="#fff"/><rect x="25.5" y="28" width="5" height="1.6" fill="#fff"/>
<path d="M14 47V39Q14 37 15 36L18.5 31Q19.5 30 21.5 30H34.5Q36.5 30 37.5 31L41 36Q42 37 42 39V47H38V45H18V47Z" fill="#fff"/>
<path d="M19 35.5L21.5 32H34.5L37 35.5Q28 34 19 35.5Z" fill="#212121"/>
<path d="M16.5 39.5Q19 40.5 21 40.5M39.5 39.5Q37 40.5 35 40.5" stroke="#212121" stroke-width="1.3"/>
</svg>
<span class="t" style="left:1689px;top:343.69px;font-size:11px;">DrivingTestBench.rrbehavior</span>
<span class="t" style="left:1515px;top:426.69px;font-size:11px;">Parent Attachment</span>
<div class="fld" style="left:1613px;top:420px;width:284px;height:24px;background:#121212"></div>
<span class="t" style="left:1620px;top:426.69px;font-size:11px;">&lt;none&gt;</span>
<div class="a" style="left:1517px;top:487px;width:18px;height:18px;background:#161616;border:1px solid #8a8a8a;border-radius:2px"></div>
<span class="t" style="left:1548px;top:490.99px;font-size:11px;">Enable Anchoring</span>
<span class="t" style="left:1515px;top:520.09px;font-size:11px;">Position</span>
<span class="t" style="left:1560px;top:520.09px;font-size:11px;">X</span>
<div class="fld" style="left:1573px;top:513px;width:324px;height:24px;background:#121212"></div><div class="spin up" style="left:1885px;top:517px"></div><div class="spin dn" style="left:1885px;top:528px"></div>
<span class="t" style="left:1579px;top:520.09px;font-size:11px;">76.95</span>
<span class="t" style="left:1560px;top:550.29px;font-size:11px;">Y</span>
<div class="fld" style="left:1573px;top:543px;width:324px;height:24px;background:#121212"></div><div class="spin up" style="left:1885px;top:547px"></div><div class="spin dn" style="left:1885px;top:558px"></div>
<span class="t" style="left:1579px;top:550.29px;font-size:11px;">1.75</span>
<span class="t" style="left:1560px;top:580.19px;font-size:11px;">Z</span>
<div class="fld" style="left:1573px;top:573px;width:324px;height:24px;background:#121212"></div><div class="spin up" style="left:1885px;top:577px"></div><div class="spin dn" style="left:1885px;top:588px"></div>
<span class="t" style="left:1579px;top:580.19px;font-size:11px;">0.00</span>
<div class="a" style="left:1496px;top:1067px;width:126px;height:35px;border-top:1px solid #8a8a8a;border-right:1px solid #8a8a8a;background:#212121"></div>
<div class="a" style="left:1746px;top:1067px;width:127px;height:35px;border-top:1px solid #8a8a8a;border-left:1px solid #8a8a8a;border-right:1px solid #8a8a8a;background:#212121"></div>
<div class="a" style="left:1873px;top:1067px;width:38px;height:35px;background:#121212;border-top:1px solid #8a8a8a"></div>
<div class="a" style="left:1622px;top:1097px;width:124px;height:4px;background:#2a8ae0"></div>
<div class="a" style="left:1496px;top:1098px;width:126px;height:4px;background:#003e73"></div>
<div class="a" style="left:1747px;top:1098px;width:126px;height:4px;background:#003e73"></div>
<span class="t" style="left:1540px;top:1078.27px;font-size:11.5px;color:#9a9a9a">Output</span>
<span class="t" style="left:1658px;top:1077.27px;font-size:11.5px;color:#e6e6e6">Attributes</span>
<span class="t" style="left:1786px;top:1078.27px;font-size:11.5px;color:#9a9a9a">Metadata</span>
<!-- /ATTRIBUTES -->
<!-- LOGIC -->
<div class="a" style="left:47px;top:832px;width:574px;height:35px;background:#121212;border:1px solid #8a8a8a;border-right:none"></div>
<span class="t" style="left:62px;top:843.69px;font-size:11px;">2D Editor | Logic</span>
<svg class="a" style="left:578px;top:838px" width="43" height="22"><circle cx="9.5" cy="11" r="4.6" stroke="#8c8c8c" stroke-width="1" fill="none"/><path d="M6.7 11.2h5.6l-2.8 2.6z" fill="#8c8c8c"/><rect x="27.5" y="6.5" width="9" height="9" stroke="#8c8c8c" fill="none"/><path d="M27.5 6.5l9 9M36.5 6.5l-9 9" stroke="#8c8c8c"/></svg>
<div class="a" style="left:47px;top:867px;width:50px;height:235px;background:#333"></div>
<div class="a" style="left:66px;top:870px;width:13px;height:2px;background:#6f7f96"></div>
<svg class="a" style="left:47px;top:867px" width="50" height="235">
<g stroke="#fff" stroke-width="1.6" fill="none">
<rect x="8.5" y="24" width="15" height="12" rx="3" fill="#2e2e2e"/><path d="M23.5 30H27.5"/><rect x="27.5" y="24" width="15" height="12" rx="3" fill="#b2b2ff"/>
<rect x="8.5" y="68" width="15" height="12" rx="3" fill="#b2b2ff"/><path d="M23.5 74H27.5"/><rect x="27.5" y="68" width="15" height="12" rx="3" fill="#2e2e2e"/>
</g>
<path d="M35 26.5V33.5M31.5 30H38.5M16 70.5V77.5M12.5 74H19.5" stroke="#111" stroke-width="1.8"/>
<rect x="6" y="99" width="39" height="38" rx="2" fill="#2a2a2a"/>
<rect x="6" y="143" width="39" height="38" rx="2" fill="#2a2a2a"/>
<g stroke="#fff" stroke-width="1.6" fill="none">
<path d="M18.5 108.5H14.5V128.5H18.5M33.5 108.5H37.5V128.5H33.5"/>
<rect x="18.5" y="102.5" width="15" height="12" rx="3" fill="#d0d0d0"/><rect x="18.5" y="122.5" width="15" height="12" rx="3" fill="#2a2a2a"/>
<path d="M18.5 152.5H14.5V172.5H18.5M33.5 152.5H37.5V172.5H33.5"/>
<rect x="18.5" y="146.5" width="15" height="12" rx="3" fill="#2a2a2a"/><rect x="18.5" y="166.5" width="15" height="12" rx="3" fill="#d0d0d0"/>
</g>
<path d="M26 104.5V112.5M22 108.5H30M26 168.5V176.5M22 172.5H30" stroke="#777" stroke-width="1.3"/>
</svg>
<svg class="a" style="left:515px;top:874px" width="100" height="24">
<rect x="3.3" y="1.5" width="18.5" height="19.3" fill="#1a1a1a"/><rect x="28.1" y="1.5" width="18.7" height="19.3" fill="#1a1a1a"/><rect x="53.1" y="1.5" width="18.8" height="19.3" fill="#1a1a1a"/><rect x="77.9" y="1.5" width="19.3" height="19.3" fill="#1a1a1a"/>
<g stroke="#fff" fill="none" stroke-width="1.3"><circle cx="10.5" cy="9.2" r="6.2"/><path d="M6.8 9.2H14.2M10.5 5.5V12.9"/><path d="M15.2 13.9L19.3 18.1" stroke-width="2.2"/>
<circle cx="35.5" cy="9.2" r="6.2"/><path d="M31.8 9.2H39.2"/><path d="M40.2 13.9L44.3 18.1" stroke-width="2.2"/>
<path d="M55 8V4.2H58.5M66.2 4.2H69.8V8M69.8 15V18.8H66.2M58.5 18.8H55V15" stroke-width="1.1"/>
<path d="M79.2 11.8L87 4.2L91.3 8.4V5.2H92.9V9.9L94.8 11.8H93V18.2H89.1V14.2H84.9V18.2H81V11.8Z" stroke-width="1.1"/></g>
<circle cx="62.5" cy="11.5" r="2.3" fill="#2a8ae0"/>
</svg>
<svg class="a" style="left:220px;top:870px" width="280" height="230">
<path d="M4 114H18M261 114H274" stroke="#d0d0d0" stroke-width="2.2"/>
<rect x="19" y="8" width="204.5" height="213.5" rx="6" fill="#8b5b87" stroke="#d2d2d2" stroke-width="2.4"/>
<path d="M44.6 61H31.7V168H44.6M186 61H209.8V168H186" stroke="#d2d2d2" stroke-width="2.2" fill="none"/>
<path d="M44.6 20.5H170Q186.2 20.5 186.2 36.5V85Q186.2 101.3 170 101.3H44.6Z" fill="#8a8a8a" stroke="#d8d8d8" stroke-width="2.2"/>
<path d="M44.6 128H170Q186.2 128 186.2 144V192Q186.2 208.4 170 208.4H44.6Z" fill="#9594d5" stroke="#d8d8d8" stroke-width="2.2"/>
<circle cx="191.4" cy="61" r="4.8" fill="#8b5b87" stroke="#d8d8d8" stroke-width="2"/>
<circle cx="191.4" cy="168" r="4.8" fill="#8b5b87" stroke="#d8d8d8" stroke-width="2"/>
<circle cx="241.9" cy="114.2" r="18" fill="#b2b2ff" stroke="#d8d8d8" stroke-width="2.2"/>
<circle cx="241.9" cy="114.2" r="9.8" fill="none" stroke="#333" stroke-width="1.3"/>
<path d="M241.9 107V114.5H248" stroke="#333" stroke-width="1.3" fill="none"/>
<g stroke="#1e1e1e" fill="none"><rect x="52.8" y="66" width="27.5" height="28" rx="2" stroke-width="1.8"/><path d="M57 70H70Q76 70 76 76Q76 82 70 82H62Q57 82 57 86Q57 90 62 90H76" stroke-width="1.2"/>
<rect x="52.8" y="173" width="27.5" height="28" rx="2" stroke-width="1.8"/><path d="M57 177H70Q76 177 76 183Q76 189 70 189H62Q57 189 57 193Q57 197 62 197H76" stroke-width="1.2"/></g>
<g fill="#1e1e1e"><circle cx="57" cy="70" r="1.6"/><circle cx="76" cy="90" r="1.6"/><circle cx="57" cy="177" r="1.6"/><circle cx="76" cy="197" r="1.6"/></g>
</svg>
<span class="t" style="left:271px;top:901.08px;font-size:22px;color:#222">VUT</span>
<span class="t" style="left:308.4px;top:941.11px;font-size:17px;color:#222">Match tim…</span>
<span class="t" style="left:271px;top:1007.98px;font-size:22px;color:#222">GVT</span>
<span class="t" style="left:308.4px;top:1048.01px;font-size:17px;color:#222">Match tim…</span>
<!-- /LOGIC -->
<!-- LIB -->
<div class="a" style="left:625px;top:832px;width:868px;height:35px;background:#121212;border-top:1px solid #8a8a8a;border-bottom:1px solid #8a8a8a;border-left:1px solid #8a8a8a"></div>
<span class="t" style="left:639px;top:843.69px;font-size:11px;">Library Browser</span>
<svg class="a" style="left:1450px;top:838px" width="43" height="22"><circle cx="8.5" cy="11" r="4.6" stroke="#8c8c8c" stroke-width="1" fill="none"/><path d="M5.7 11.2h5.6l-2.8 2.6z" fill="#8c8c8c"/><rect x="26.5" y="6.5" width="9" height="9" stroke="#8c8c8c" fill="none"/><path d="M26.5 6.5l9 9M35.5 6.5l-9 9" stroke="#8c8c8c"/></svg>
<svg class="a" style="left:632px;top:881px" width="20" height="20"><circle cx="6.8" cy="6.8" r="5" stroke="#d0d0d0" stroke-width="1.1" fill="none"/><path d="M10.5 10.5L16 16" stroke="#d8d8d8" stroke-width="2"/></svg>
<div class="fld" style="left:655px;top:878px;width:634px;height:24px"></div>
<span class="t" style="left:661px;top:884.69px;font-size:11px;">Search</span>
<span class="t" style="left:1295px;top:884.69px;font-size:11px;">Search location:</span>
<div class="fld" style="left:1380px;top:876px;width:104px;height:28px;border-radius:3px"></div>
<span class="t" style="left:1386px;top:884.69px;font-size:11px;">All Assets</span>
<div class="spin dn" style="left:1471px;top:888px;border-top-color:#9a9a9a"></div>
<div class="a" style="left:625px;top:913px;width:868px;height:1px;background:#8a8a8a"></div>
<div class="a" style="left:626px;top:914px;width:239px;height:188px;background:#1d1d1d"></div>
<div class="a" style="left:865px;top:914px;width:13px;height:188px;background:#1a1a1a"></div>
<div class="spin up" style="left:868px;top:916px;border-left-width:3.5px;border-right-width:3.5px;border-bottom-width:4px;border-bottom-color:#a0a0a0"></div>
<div class="a" style="left:868px;top:929px;width:6px;height:40px;background:#5a5a5a;border-radius:1px"></div>
<div class="spin dn" style="left:868px;top:1093px;border-left-width:3.5px;border-right-width:3.5px;border-top-width:4px;border-top-color:#a0a0a0"></div>
<div class="a" style="left:879px;top:914px;width:4px;height:188px;background:#8a8a8a"></div>
<div class="a" style="left:1477px;top:914px;width:15px;height:188px;background:#1a1a1a"></div>
<div class="spin up" style="left:1481px;top:916px;border-left-width:3.5px;border-right-width:3.5px;border-bottom-width:4px;border-bottom-color:#a0a0a0"></div>
<div class="a" style="left:1481px;top:929px;width:6px;height:33px;background:#5a5a5a;border-radius:1px"></div>
<div class="spin dn" style="left:1481px;top:1093px;border-left-width:3.5px;border-right-width:3.5px;border-top-width:4px;border-top-color:#a0a0a0"></div>
<svg class="a" style="left:630px;top:918px" width="12" height="12"><path d="M1 1.5H11L6 7Z" fill="#8a8a8a"/><rect x="1" y="9" width="10" height="2" fill="#8a8a8a"/></svg>
<svg class="a" style="left:647px;top:917px" width="17" height="14" viewBox="0 0 17 14"><path d="M0.5 2.5Q0.5 0.8 2 0.8H6.2L8 2.6H15Q16.5 2.6 16.5 4V12.3Q16.5 13.5 15.2 13.5H1.8Q0.5 13.5 0.5 12.3Z" fill="#f2b620"/><path d="M0.5 4.5H16.5V12.3Q16.5 13.5 15.2 13.5H1.8Q0.5 13.5 0.5 12.3Z" fill="url(#fg)"/></svg>
<span class="t" style="left:670px;top:918.69px;font-size:11px;">Assets</span>
<svg class="a" style="left:650px;top:938.3px" width="12" height="12"><rect x="0.5" y="1" width="1.4" height="10" fill="#8a8a8a"/><path d="M3.5 1.2L9.5 6L3.5 10.8Z" fill="#8a8a8a"/></svg>
<svg class="a" style="left:667px;top:937px" width="17" height="14" viewBox="0 0 17 14"><path d="M0.5 2.5Q0.5 0.8 2 0.8H6.2L8 2.6H15Q16.5 2.6 16.5 4V12.3Q16.5 13.5 15.2 13.5H1.8Q0.5 13.5 0.5 12.3Z" fill="#f2b620"/><path d="M0.5 4.5H16.5V12.3Q16.5 13.5 15.2 13.5H1.8Q0.5 13.5 0.5 12.3Z" fill="url(#fg)"/></svg>
<span class="t" style="left:690px;top:938.99px;font-size:11px;">Actions</span>
<svg class="a" style="left:650px;top:958.3px" width="12" height="12"><rect x="0.5" y="1" width="1.4" height="10" fill="#8a8a8a"/><path d="M3.5 1.2L9.5 6L3.5 10.8Z" fill="#8a8a8a"/></svg>
<svg class="a" style="left:667px;top:957px" width="17" height="14" viewBox="0 0 17 14"><path d="M0.5 2.5Q0.5 0.8 2 0.8H6.2L8 2.6H15Q16.5 2.6 16.5 4V12.3Q16.5 13.5 15.2 13.5H1.8Q0.5 13.5 0.5 12.3Z" fill="#f2b620"/><path d="M0.5 4.5H16.5V12.3Q16.5 13.5 15.2 13.5H1.8Q0.5 13.5 0.5 12.3Z" fill="url(#fg)"/></svg>
<span class="t" style="left:690px;top:958.99px;font-size:11px;">Assemblies</span>
<svg class="a" style="left:650px;top:978.3px" width="12" height="12"><rect x="0.5" y="1" width="1.4" height="10" fill="#8a8a8a"/><path d="M3.5 1.2L9.5 6L3.5 10.8Z" fill="#8a8a8a"/></svg>
<svg class="a" style="left:667px;top:977px" width="17" height="14" viewBox="0 0 17 14"><path d="M0.5 2.5Q0.5 0.8 2 0.8H6.2L8 2.6H15Q16.5 2.6 16.5 4V12.3Q16.5 13.5 15.2 13.5H1.8Q0.5 13.5 0.5 12.3Z" fill="#f2b620"/><path d="M0.5 4.5H16.5V12.3Q16.5 13.5 15.2 13.5H1.8Q0.5 13.5 0.5 12.3Z" fill="url(#fg)"/></svg>
<span class="t" style="left:690px;top:978.99px;font-size:11px;">Behaviors</span>
<svg class="a" style="left:650px;top:998.3px" width="12" height="12"><rect x="0.5" y="1" width="1.4" height="10" fill="#8a8a8a"/><path d="M3.5 1.2L9.5 6L3.5 10.8Z" fill="#8a8a8a"/></svg>
<svg class="a" style="left:667px;top:997px" width="17" height="14" viewBox="0 0 17 14"><path d="M0.5 2.5Q0.5 0.8 2 0.8H6.2L8 2.6H15Q16.5 2.6 16.5 4V12.3Q16.5 13.5 15.2 13.5H1.8Q0.5 13.5 0.5 12.3Z" fill="#f2b620"/><path d="M0.5 4.5H16.5V12.3Q16.5 13.5 15.2 13.5H1.8Q0.5 13.5 0.5 12.3Z" fill="url(#fg)"/></svg>
<span class="t" style="left:690px;top:998.99px;font-size:11px;">Buildings</span>
<svg class="a" style="left:650px;top:1018.3px" width="12" height="12"><rect x="0.5" y="1" width="1.4" height="10" fill="#8a8a8a"/><path d="M3.5 1.2L9.5 6L3.5 10.8Z" fill="#8a8a8a"/></svg>
<svg class="a" style="left:667px;top:1017px" width="17" height="14" viewBox="0 0 17 14"><path d="M0.5 2.5Q0.5 0.8 2 0.8H6.2L8 2.6H15Q16.5 2.6 16.5 4V12.3Q16.5 13.5 15.2 13.5H1.8Q0.5 13.5 0.5 12.3Z" fill="#f2b620"/><path d="M0.5 4.5H16.5V12.3Q16.5 13.5 15.2 13.5H1.8Q0.5 13.5 0.5 12.3Z" fill="url(#fg)"/></svg>
<span class="t" style="left:690px;top:1018.99px;font-size:11px;">Characters</span>
<svg class="a" style="left:650px;top:1038.3px" width="12" height="12"><rect x="0.5" y="1" width="1.4" height="10" fill="#8a8a8a"/><path d="M3.5 1.2L9.5 6L3.5 10.8Z" fill="#8a8a8a"/></svg>
<svg class="a" style="left:667px;top:1037px" width="17" height="14" viewBox="0 0 17 14"><path d="M0.5 2.5Q0.5 0.8 2 0.8H6.2L8 2.6H15Q16.5 2.6 16.5 4V12.3Q16.5 13.5 15.2 13.5H1.8Q0.5 13.5 0.5 12.3Z" fill="#f2b620"/><path d="M0.5 4.5H16.5V12.3Q16.5 13.5 15.2 13.5H1.8Q0.5 13.5 0.5 12.3Z" fill="url(#fg)"/></svg>
<span class="t" style="left:690px;top:1038.99px;font-size:11px;">Damage</span>
<svg class="a" style="left:650px;top:1058.3px" width="12" height="12"><rect x="0.5" y="1" width="1.4" height="10" fill="#8a8a8a"/><path d="M3.5 1.2L9.5 6L3.5 10.8Z" fill="#8a8a8a"/></svg>
<svg class="a" style="left:667px;top:1057px" width="17" height="14" viewBox="0 0 17 14"><path d="M0.5 2.5Q0.5 0.8 2 0.8H6.2L8 2.6H15Q16.5 2.6 16.5 4V12.3Q16.5 13.5 15.2 13.5H1.8Q0.5 13.5 0.5 12.3Z" fill="#f2b620"/><path d="M0.5 4.5H16.5V12.3Q16.5 13.5 15.2 13.5H1.8Q0.5 13.5 0.5 12.3Z" fill="url(#fg)"/></svg>
<span class="t" style="left:690px;top:1058.99px;font-size:11px;">EuroNCAPTestSuite</span>
<svg class="a" style="left:650px;top:1078.3px" width="12" height="12"><rect x="0.5" y="1" width="1.4" height="10" fill="#8a8a8a"/><path d="M3.5 1.2L9.5 6L3.5 10.8Z" fill="#8a8a8a"/></svg>
<svg class="a" style="left:667px;top:1077px" width="17" height="14" viewBox="0 0 17 14"><path d="M0.5 2.5Q0.5 0.8 2 0.8H6.2L8 2.6H15Q16.5 2.6 16.5 4V12.3Q16.5 13.5 15.2 13.5H1.8Q0.5 13.5 0.5 12.3Z" fill="#f2b620"/><path d="M0.5 4.5H16.5V12.3Q16.5 13.5 15.2 13.5H1.8Q0.5 13.5 0.5 12.3Z" fill="url(#fg)"/></svg>
<span class="t" style="left:690px;top:1078.99px;font-size:11px;">Events</span>
<svg class="a" style="left:650px;top:1098.3px" width="12" height="12"><rect x="0.5" y="1" width="1.4" height="10" fill="#8a8a8a"/><path d="M3.5 1.2L9.5 6L3.5 10.8Z" fill="#8a8a8a"/></svg>
<svg class="a" style="left:667px;top:1097px" width="17" height="14" viewBox="0 0 17 14"><path d="M0.5 2.5Q0.5 0.8 2 0.8H6.2L8 2.6H15Q16.5 2.6 16.5 4V12.3Q16.5 13.5 15.2 13.5H1.8Q0.5 13.5 0.5 12.3Z" fill="#f2b620"/><path d="M0.5 4.5H16.5V12.3Q16.5 13.5 15.2 13.5H1.8Q0.5 13.5 0.5 12.3Z" fill="url(#fg)"/></svg>
<span class="t" style="left:690px;top:1098.99px;font-size:11px;">Exterior</span>
<svg class="a" style="left:896px;top:924px" width="64" height="51" viewBox="0 0 64 51"><path d="M0 4Q0 0 4 0H24Q26 0 28 2L31 6H60Q64 6 64 10V47Q64 51 60 51H4Q0 51 0 47Z" fill="#f3b622"/><path d="M0 10Q0 7 3 7H61Q64 7 64 10V47Q64 51 60 51H4Q0 51 0 47Z" fill="url(#fg)"/><path d="M0 10Q0 7 3 7H27L30 10Z" fill="#f3b622"/></svg>
<span class="t" style="left:868px;width:120px;text-align:center;top:991.39px;font-size:11px;">ADT Vehicles</span>
<svg class="a" style="left:988px;top:924px" width="64" height="51" viewBox="0 0 64 51"><path d="M0 4Q0 0 4 0H24Q26 0 28 2L31 6H60Q64 6 64 10V47Q64 51 60 51H4Q0 51 0 47Z" fill="#f3b622"/><path d="M0 10Q0 7 3 7H61Q64 7 64 10V47Q64 51 60 51H4Q0 51 0 47Z" fill="url(#fg)"/><path d="M0 10Q0 7 3 7H27L30 10Z" fill="#f3b622"/></svg>
<span class="t" style="left:960px;width:120px;text-align:center;top:991.39px;font-size:11px;">NCAP Assets</span>
<svg class="a" style="left:1080px;top:924px" width="64" height="51" viewBox="0 0 64 51"><path d="M0 4Q0 0 4 0H24Q26 0 28 2L31 6H60Q64 6 64 10V47Q64 51 60 51H4Q0 51 0 47Z" fill="#f3b622"/><path d="M0 10Q0 7 3 7H61Q64 7 64 10V47Q64 51 60 51H4Q0 51 0 47Z" fill="url(#fg)"/><path d="M0 10Q0 7 3 7H27L30 10Z" fill="#f3b622"/></svg>
<span class="t" style="left:1052px;width:120px;text-align:center;top:991.39px;font-size:11px;">Vehicle Text</span>
<span class="t" style="left:1052px;width:120px;text-align:center;top:1005.19px;font-size:11px;">ures</span>
<svg class="a" style="left:1168px;top:915px" width="72" height="72" viewBox="0 0 72 72"><rect width="72" height="72" fill="#7b8452"/><rect width="72" height="15.5" fill="#c4dcf9"/><path d="M32 18H52L72 22V72H0V44Z" fill="#6b706d"/><path d="M32 18H36.5L10 72H0V44Z" fill="#c9cec9"/><path d="M34.3 18.5L1 71" stroke="#3e4d66" stroke-width="1.1"/><path d="M48 18H52L72 22V35Z" fill="#c9cec9"/><path d="M42.5 18L65 72M44 18L67.5 72" stroke="#d9c616" stroke-width="0.9"/><path d="M25 58H55L58 71H28Z" fill="#4a5058"/><rect x="24.4" y="23" width="22.6" height="15" fill="#f21010"/><path d="M26 29.5H46" stroke="#9aa0b0" stroke-width="1.2" stroke-dasharray="2 2"/><rect x="24" y="38" width="23" height="5.5" fill="#8a7f86"/><rect x="22" y="39.5" width="2" height="3" fill="#111"/><rect x="47" y="39.5" width="2" height="3" fill="#111"/><rect x="22.5" y="43.5" width="24.5" height="7.5" fill="#ff1414"/><rect x="22.5" y="51" width="24.5" height="8" fill="#5c626a"/><path d="M25 54.5H45M25 57H45" stroke="#3a3e44" stroke-width="0.8"/></svg>
<span class="t" style="left:1144px;width:120px;text-align:center;top:991.39px;font-size:11px;">Ambulance</span>
<svg class="a" style="left:1260px;top:915px" width="72" height="72" viewBox="0 0 72 72"><rect width="72" height="72" fill="#7b8452"/><rect width="72" height="14.3" fill="#c4dcf9"/><path d="M28 16H48L72 21V72H0V28Z" fill="#6b706d"/><path d="M28 16H33L0 56V28Z" fill="#c9cec9"/><path d="M31 17L0 45" stroke="#3e4d66" stroke-width="1.1"/><path d="M46 16H50L72 20V28Z" fill="#c9cec9"/><path d="M41 16L72 46M42.5 16L72 43" stroke="#d9c616" stroke-width="0.9"/><path d="M33 72L38 63L50 63L56 72Z" fill="#50555c" opacity=".8"/><rect x="25.5" y="7" width="20" height="65" fill="#8899b6"/><rect x="25.5" y="7" width="20" height="3" fill="#7688a6"/><rect x="33" y="61" width="4" height="11" fill="#a9bcd6"/></svg>
<span class="t" style="left:1236px;width:120px;text-align:center;top:991.39px;font-size:11px;">Bicyclist</span>
<svg class="a" style="left:1352px;top:915px" width="72" height="72" viewBox="0 0 72 72"><rect width="72" height="72" fill="#7b8452"/><rect width="72" height="16" fill="#c4dcf9"/><path d="M33 19.5H50L72 33V72H0V56Z" fill="#6b706d"/><path d="M33 19.5H36.5L16 72H0V56Z" fill="#c9cec9"/><path d="M35 20L10.5 72" stroke="#3e4d66" stroke-width="1.1"/><path d="M47.5 19.5H50L72 33V44Z" fill="#c9cec9"/><path d="M42 19.5L56 72M43.5 19.5L59 72" stroke="#d9c616" stroke-width="0.9"/><path d="M28 59H52L56 72H30Z" fill="#4a5058"/><rect x="33.5" y="21" width="7" height="4" fill="#333"/><ellipse cx="37" cy="29" rx="6.5" ry="5.5" fill="#9a9c94"/><rect x="28.5" y="33" width="14.5" height="5" fill="#f4f4f4"/><rect x="27" y="37" width="17" height="3.5" fill="#3a4048"/><rect x="26" y="37" width="2" height="4" fill="#111"/><rect x="44" y="37" width="2" height="4" fill="#111"/><rect x="27.5" y="40.5" width="16.5" height="19" fill="#fafafa"/><rect x="30" y="48.5" width="9.5" height="10.5" fill="#15140f"/></svg>
<span class="t" style="left:1328px;width:120px;text-align:center;top:991.39px;font-size:11px;">CementTruck</span>
<svg class="a" style="left:892px;top:1027px" width="72" height="72" viewBox="0 0 72 72"><rect width="72" height="72" fill="#7b8452"/><rect width="72" height="14.3" fill="#c4dcf9"/><path d="M28 16H48L72 21V72H0V28Z" fill="#6b706d"/><path d="M28 16H33L0 56V28Z" fill="#c9cec9"/><path d="M31 17L0 45" stroke="#3e4d66" stroke-width="1.1"/><path d="M46 16H50L72 20V28Z" fill="#c9cec9"/><path d="M41 16L72 46M42.5 16L72 43" stroke="#d9c616" stroke-width="0.9"/><path d="M30 72L36 62L52 62L58 72Z" fill="#50555c" opacity=".8"/><rect x="25" y="3" width="21.5" height="65" fill="#7d8fae"/><rect x="25" y="3" width="21.5" height="2.5" fill="#6f819f"/></svg>
<svg class="a" style="left:984px;top:1027px" width="72" height="72" viewBox="0 0 72 72"><rect width="72" height="72" fill="#7b8452"/><rect width="72" height="15.5" fill="#c4dcf9"/><path d="M32 18H52L72 22V72H0V44Z" fill="#6b706d"/><path d="M32 18H36.5L10 72H0V44Z" fill="#c9cec9"/><path d="M34.3 18.5L1 71" stroke="#3e4d66" stroke-width="1.1"/><path d="M48 18H52L72 22V35Z" fill="#c9cec9"/><path d="M42.5 18L65 72M44 18L67.5 72" stroke="#d9c616" stroke-width="0.9"/><ellipse cx="37" cy="64" rx="19" ry="8" fill="#4a5058"/><rect x="30" y="24.5" width="13" height="5" rx="1.5" fill="#f8f8f8"/><path d="M27 29.5H46L49.5 39H23.5Z" fill="#34383e"/><rect x="22" y="33" width="3" height="2" fill="#9ab"/><rect x="48" y="33" width="3" height="2" fill="#9ab"/><path d="M20 45Q21 38.5 28 38.5H45Q52 38.5 53 45V56Q53 59 50 59H23Q20 59 20 56Z" fill="#f6f7f9"/><circle cx="24.5" cy="47" r="2.3" fill="#9aa4ae"/><circle cx="48.5" cy="47" r="2.3" fill="#9aa4ae"/><rect x="27" y="52" width="19" height="2.5" fill="#2e3238"/></svg>
<svg class="a" style="left:1076px;top:1027px" width="72" height="72" viewBox="0 0 72 72"><rect width="72" height="72" fill="#7b8452"/><rect width="72" height="15.5" fill="#c4dcf9"/><path d="M32 18H52L72 22V72H0V44Z" fill="#6b706d"/><path d="M32 18H36.5L10 72H0V44Z" fill="#c9cec9"/><path d="M34.3 18.5L1 71" stroke="#3e4d66" stroke-width="1.1"/><path d="M48 18H52L72 22V35Z" fill="#c9cec9"/><path d="M42.5 18L65 72M44 18L67.5 72" stroke="#d9c616" stroke-width="0.9"/><path d="M18 59H54L60 72H22Z" fill="#4a5058"/><rect x="17.8" y="23.8" width="34.2" height="7" fill="#ffffff"/><rect x="17.8" y="30.8" width="34.2" height="28.6" fill="#e8edf5"/><rect x="46" y="30.8" width="6" height="28.6" fill="#d6dce8"/></svg>
<svg class="a" style="left:1168px;top:1027px" width="72" height="72" viewBox="0 0 72 72"><rect width="72" height="72" fill="#7b8452"/><rect width="72" height="15.5" fill="#c4dcf9"/><path d="M32 18H52L72 22V72H0V44Z" fill="#6b706d"/><path d="M32 18H36.5L10 72H0V44Z" fill="#c9cec9"/><path d="M34.3 18.5L1 71" stroke="#3e4d66" stroke-width="1.1"/><path d="M48 18H52L72 22V35Z" fill="#c9cec9"/><path d="M42.5 18L65 72M44 18L67.5 72" stroke="#d9c616" stroke-width="0.9"/><path d="M22 59H50L56 72H26Z" fill="#4a5058"/><rect x="22.5" y="22" width="24" height="6" fill="#ffffff"/><rect x="21.5" y="28" width="26" height="31" fill="#eef0f5"/><rect x="24" y="33" width="9.5" height="7.5" fill="#2f3338"/><rect x="35.5" y="33" width="9.5" height="7.5" fill="#2f3338"/><rect x="25" y="50" width="19" height="5.5" fill="#8c9096"/><path d="M25 52H44M25 54H44" stroke="#dfe2e6" stroke-width=".6"/></svg>
<svg class="a" style="left:1260px;top:1027px" width="72" height="72" viewBox="0 0 72 72"><rect width="72" height="72" fill="#7b8452"/><rect width="72" height="15.5" fill="#c4dcf9"/><path d="M32 18H52L72 22V72H0V44Z" fill="#6b706d"/><path d="M32 18H36.5L10 72H0V44Z" fill="#c9cec9"/><path d="M34.3 18.5L1 71" stroke="#3e4d66" stroke-width="1.1"/><path d="M48 18H52L72 22V35Z" fill="#c9cec9"/><path d="M42.5 18L65 72M44 18L67.5 72" stroke="#d9c616" stroke-width="0.9"/><path d="M24 59H50L56 72H28Z" fill="#4a5058"/><rect x="24.5" y="24" width="22" height="10.5" fill="#2f5c3c"/><rect x="23.5" y="34.5" width="24" height="7" fill="#3e7050"/><rect x="23.5" y="41.5" width="24" height="17.5" fill="#244630"/><rect x="25" y="43" width="21" height="6" fill="#2e3834"/><rect x="25" y="52" width="21" height="1.2" fill="#506858"/></svg>
<svg class="a" style="left:1352px;top:1027px" width="72" height="72" viewBox="0 0 72 72"><rect width="72" height="72" fill="#7b8452"/><rect width="72" height="15.5" fill="#c4dcf9"/><path d="M32 18H52L72 22V72H0V44Z" fill="#6b706d"/><path d="M32 18H36.5L10 72H0V44Z" fill="#c9cec9"/><path d="M34.3 18.5L1 71" stroke="#3e4d66" stroke-width="1.1"/><path d="M48 18H52L72 22V35Z" fill="#c9cec9"/><path d="M42.5 18L65 72M44 18L67.5 72" stroke="#d9c616" stroke-width="0.9"/><path d="M18 59H54L60 72H22Z" fill="#4a5058"/><rect x="16" y="24" width="37" height="8" fill="#ffffff"/><rect x="16" y="32" width="37" height="26.5" fill="#e6ebf3"/><rect x="47" y="32" width="6" height="26.5" fill="#d4dae6"/></svg>
<!-- /LIB -->
<!-- STATUS -->
<div class="a status"></div>
<svg class="a" style="left:3px;top:1108px" width="14" height="14"><circle cx="6.7" cy="6.6" r="5.5" fill="#fff"/><rect x="5.8" y="5.2" width="2" height="5" fill="#1a5fb4"/><circle cx="6.8" cy="3.6" r="1.1" fill="#1a5fb4"/></svg>
<span class="t" style="left:22px;top:1109.08px;font-size:11.6px;font-weight:bold;color:#e8e8e8">Scenario Edit Tool</span>
<span class="t" style="left:126.5px;top:1109.59px;font-size:11px;color:#e0e0e0">| Right click to create new routes or insert nodes into existing routes.</span>
<span class="t" style="left:1845px;top:1108px;font-size:14.6px;font-family:&quot;Liberation Serif&quot;,serif;color:#f2f2f2">MathWorks</span>
</body></html>
